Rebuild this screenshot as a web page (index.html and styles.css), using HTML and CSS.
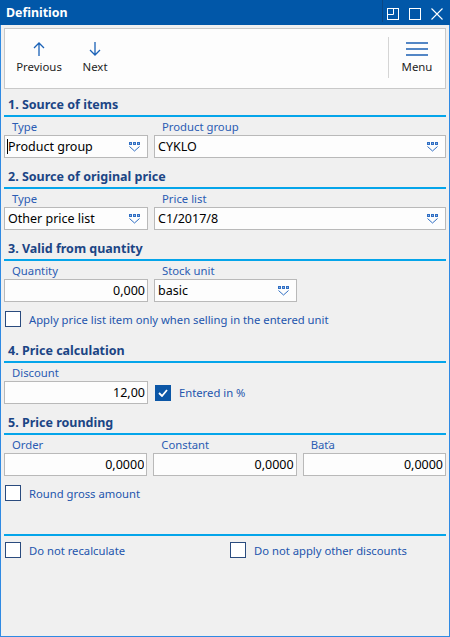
FILE: index.html
```html
<!DOCTYPE html>
<html>
<head>
<meta charset="utf-8">
<title>Definition</title>
<link rel="stylesheet" href="styles.css">
</head>
<body>
<div class="window">
  <div class="titlebar">
    <span class="title">Definition</span>
    <div class="wincontrols">
      <span class="wsep"></span>
      <svg class="wicon" width="12" height="12" viewBox="0 0 12 12"><rect x="0.5" y="0.5" width="11" height="11" fill="none" stroke="#fff"/><polyline points="0.5,6.5 6.5,6.5 6.5,0.5" fill="none" stroke="#fff"/></svg>
      <svg class="wicon" width="12" height="12" viewBox="0 0 12 12"><rect x="0.5" y="0.5" width="11" height="11" fill="none" stroke="#fff"/></svg>
      <svg class="wicon" width="12" height="12" viewBox="0 0 12 12"><path d="M0.5 0.5 L11.5 11.5 M11.5 0.5 L0.5 11.5" stroke="#fff" stroke-width="1.1" fill="none"/></svg>
    </div>
  </div>
  <div class="frame">
    <div class="toolbar">
      <div class="tool">
        <svg width="12" height="14" viewBox="0 0 12 14"><path d="M6 1 V14 M1 6 L6 1 L11 6" stroke="#1b62b7" stroke-width="1.3" fill="none"/></svg>
        <span class="tool-label">Previous</span>
      </div>
      <div class="tool">
        <svg width="12" height="14" viewBox="0 0 12 14"><path d="M6 0 V13 M1 8 L6 13 L11 8" stroke="#1b62b7" stroke-width="1.3" fill="none"/></svg>
        <span class="tool-label">Next</span>
      </div>
      <div class="tool-spacer"></div>
      <div class="tool-sep"></div>
      <div class="tool">
        <svg width="22" height="14" viewBox="0 0 22 14"><path d="M0 1 H22 M0 7 H22 M0 13 H22" stroke="#1b5fb3" stroke-width="1.5" fill="none"/></svg>
        <span class="tool-label">Menu</span>
      </div>
    </div>

    <div class="content">
      <h2 class="sec-title">1. Source of items</h2>
      <div class="grid grid-main">
        <div class="field">
          <span class="label">Type</span>
          <div class="input has-caret"><span class="caret"></span><span class="val">Product group</span>
            <svg class="dd" width="12" height="10" viewBox="0 0 12 10"><rect x="0.5" y="0.5" width="2" height="2" fill="#8fb3e4" stroke="#2f6ec3"/><rect x="4.5" y="0.5" width="2" height="2" fill="#8fb3e4" stroke="#2f6ec3"/><rect x="8.5" y="0.5" width="2" height="2" fill="#8fb3e4" stroke="#2f6ec3"/><polyline points="0.5,4.5 5.5,9 10.5,4.5" fill="none" stroke="#2f6ec3"/></svg>
          </div>
        </div>
        <div class="field">
          <span class="label">Product group</span>
          <div class="input"><span class="val">CYKLO</span>
            <svg class="dd" width="12" height="10" viewBox="0 0 12 10"><rect x="0.5" y="0.5" width="2" height="2" fill="#8fb3e4" stroke="#2f6ec3"/><rect x="4.5" y="0.5" width="2" height="2" fill="#8fb3e4" stroke="#2f6ec3"/><rect x="8.5" y="0.5" width="2" height="2" fill="#8fb3e4" stroke="#2f6ec3"/><polyline points="0.5,4.5 5.5,9 10.5,4.5" fill="none" stroke="#2f6ec3"/></svg>
          </div>
        </div>
      </div>

      <h2 class="sec-title">2. Source of original price</h2>
      <div class="grid grid-main">
        <div class="field">
          <span class="label">Type</span>
          <div class="input"><span class="val">Other price list</span>
            <svg class="dd" width="12" height="10" viewBox="0 0 12 10"><rect x="0.5" y="0.5" width="2" height="2" fill="#8fb3e4" stroke="#2f6ec3"/><rect x="4.5" y="0.5" width="2" height="2" fill="#8fb3e4" stroke="#2f6ec3"/><rect x="8.5" y="0.5" width="2" height="2" fill="#8fb3e4" stroke="#2f6ec3"/><polyline points="0.5,4.5 5.5,9 10.5,4.5" fill="none" stroke="#2f6ec3"/></svg>
          </div>
        </div>
        <div class="field">
          <span class="label">Price list</span>
          <div class="input"><span class="val">C1/2017/8</span>
            <svg class="dd" width="12" height="10" viewBox="0 0 12 10"><rect x="0.5" y="0.5" width="2" height="2" fill="#8fb3e4" stroke="#2f6ec3"/><rect x="4.5" y="0.5" width="2" height="2" fill="#8fb3e4" stroke="#2f6ec3"/><rect x="8.5" y="0.5" width="2" height="2" fill="#8fb3e4" stroke="#2f6ec3"/><polyline points="0.5,4.5 5.5,9 10.5,4.5" fill="none" stroke="#2f6ec3"/></svg>
          </div>
        </div>
      </div>

      <h2 class="sec-title">3. Valid from quantity</h2>
      <div class="grid grid-pair">
        <div class="field">
          <span class="label">Quantity</span>
          <div class="input num"><span class="val">0,000</span></div>
        </div>
        <div class="field">
          <span class="label">Stock unit</span>
          <div class="input"><span class="val">basic</span>
            <svg class="dd" width="12" height="10" viewBox="0 0 12 10"><rect x="0.5" y="0.5" width="2" height="2" fill="#8fb3e4" stroke="#2f6ec3"/><rect x="4.5" y="0.5" width="2" height="2" fill="#8fb3e4" stroke="#2f6ec3"/><rect x="8.5" y="0.5" width="2" height="2" fill="#8fb3e4" stroke="#2f6ec3"/><polyline points="0.5,4.5 5.5,9 10.5,4.5" fill="none" stroke="#2f6ec3"/></svg>
          </div>
        </div>
      </div>
      <div class="check-row">
        <span class="cb"></span><span class="cb-label">Apply price list item only when selling in the entered unit</span>
      </div>

      <h2 class="sec-title sec-after-check">4. Price calculation</h2>
      <div class="grid grid-main">
        <div class="field">
          <span class="label">Discount</span>
          <div class="input num"><span class="val">12,00</span></div>
        </div>
        <div class="check-inline">
          <span class="cb checked"><svg width="10" height="8" viewBox="0 0 10 8"><polyline points="1,4 4,7 9,1" fill="none" stroke="#fff" stroke-width="1.8"/></svg></span><span class="cb-label">Entered in %</span>
        </div>
      </div>

      <h2 class="sec-title">5. Price rounding</h2>
      <div class="grid grid-three">
        <div class="field">
          <span class="label">Order</span>
          <div class="input num"><span class="val">0,0000</span></div>
        </div>
        <div class="field">
          <span class="label">Constant</span>
          <div class="input num"><span class="val">0,0000</span></div>
        </div>
        <div class="field">
          <span class="label">Baťa</span>
          <div class="input num"><span class="val">0,0000</span></div>
        </div>
      </div>
      <div class="check-row">
        <span class="cb"></span><span class="cb-label">Round gross amount</span>
      </div>

      <div class="divider"></div>
      <div class="bottom-row">
        <div class="check-inline"><span class="cb"></span><span class="cb-label">Do not recalculate</span></div>
        <div class="check-inline"><span class="cb"></span><span class="cb-label">Do not apply other discounts</span></div>
      </div>
    </div>
  </div>
</div>
</body>
</html>
```

FILE: styles.css
```css
* { box-sizing: border-box; }
html, body { margin: 0; padding: 0; }
body {
  width: 450px;
  height: 637px;
  background: #f0f0f0;
  font-family: "Noto Sans", "Open Sans", sans-serif;
  font-size: 12px;
  color: #000;
  overflow: hidden;
}
.window {
  width: 450px;
  height: 637px;
  display: flex;
  flex-direction: column;
}
.titlebar {
  height: 25px;
  background: #0157a8;
  display: flex;
  align-items: center;
  padding-left: 6px;
  flex-shrink: 0;
}
.title {
  color: #fff;
  font-weight: bold;
  font-size: 12.4px;
  flex: 1;
  line-height: 25px;
}
.wincontrols {
  display: flex;
  align-items: center;
  height: 25px;
  padding-right: 7px;
}
.wsep {
  width: 1px;
  height: 22px;
  align-self: flex-start;
  background: #0b4785;
  margin-right: 4px;
}
.wicon { margin-left: 0; margin-right: 10px; margin-top: 3px; }
.wicon:last-child { margin-right: 0; }

.frame {
  flex: 1;
  border: 1px solid #2f8ae3;
  border-top: none;
  padding: 3px 3px 0 3px;
  display: flex;
  flex-direction: column;
}
.toolbar {
  height: 61px;
  background: #fdfdfd;
  border: 1px solid #c9c9c9;
  display: flex;
  align-items: stretch;
  padding-left: 6px;
}
.tool {
  width: 56px;
  display: flex;
  flex-direction: column;
  align-items: center;
  padding-top: 13px;
}
.tool svg { display: block; }
.tool-label {
  margin-top: 3px;
  line-height: 16px;
  color: #1f1f1f;
  font-size: 11.4px;
}
.tool-spacer { flex: 1; }
.tool-sep {
  width: 1px;
  background: #d5d5d5;
  margin: 8px 0 10px 0;
}

.content { display: flex; flex-direction: column; }
.sec-title {
  margin: 9px 0 0 0;
  height: 22px;
  line-height: 20px;
  font-size: 12.5px;
  font-weight: bold;
  color: #1b4585;
  padding-left: 4px;
  border-bottom: 2px solid #05a5ea;
}
.content > .sec-title:first-child { margin-top: 6px; }
.sec-title.sec-after-check { margin-top: 14px; }

.grid { display: grid; column-gap: 6px; }
.grid-main { grid-template-columns: 144px 1fr; }
.grid-pair { grid-template-columns: 144px 143px; }
.grid-three { grid-template-columns: 1fr 1fr 1fr; }

.field { display: flex; flex-direction: column; }
.label {
  display: block;
  padding: 1px 0 0 8px;
  height: 18px;
  line-height: 17px;
  font-size: 11.3px;
  color: #2b5cb3;
}
.input {
  height: 23px;
  border: 1px solid #b9b9b9;
  background: #fdfdfd;
  display: flex;
  align-items: center;
  padding: 0 6px 0 3px;
  line-height: 21px;
  font-size: 12.5px;
}
.input .val { flex: 1; white-space: nowrap; overflow: hidden; }
.input.has-caret { padding-left: 2px; }
.caret {
  width: 1px;
  height: 15px;
  background: #000;
  flex-shrink: 0;
}
.input.num { padding-right: 2px; }
.input.num .val { text-align: right; }
.dd { flex-shrink: 0; display: block; }

.check-row {
  display: flex;
  align-items: center;
  margin-top: 9px;
  height: 16px;
  padding-left: 1px;
}
.check-inline {
  display: flex;
  align-items: center;
  padding-left: 1px;
}
.cb {
  width: 16px;
  height: 16px;
  border: 1px solid #2a4b7e;
  background: #fff;
  flex-shrink: 0;
  display: flex;
  align-items: center;
  justify-content: center;
}
.cb.checked { background: #0b56a6; border-color: #0b56a6; }
.cb-label {
  margin-left: 8px;
  color: #2355ad;
  white-space: nowrap;
  font-size: 11.25px;
}
.grid-main .check-inline { align-self: end; height: 23px; }

.divider {
  height: 2px;
  background: #05a5ea;
  margin-top: 33px;
}
.bottom-row {
  display: grid;
  grid-template-columns: 225px 1fr;
  margin-top: 6px;
  height: 16px;
}
```
